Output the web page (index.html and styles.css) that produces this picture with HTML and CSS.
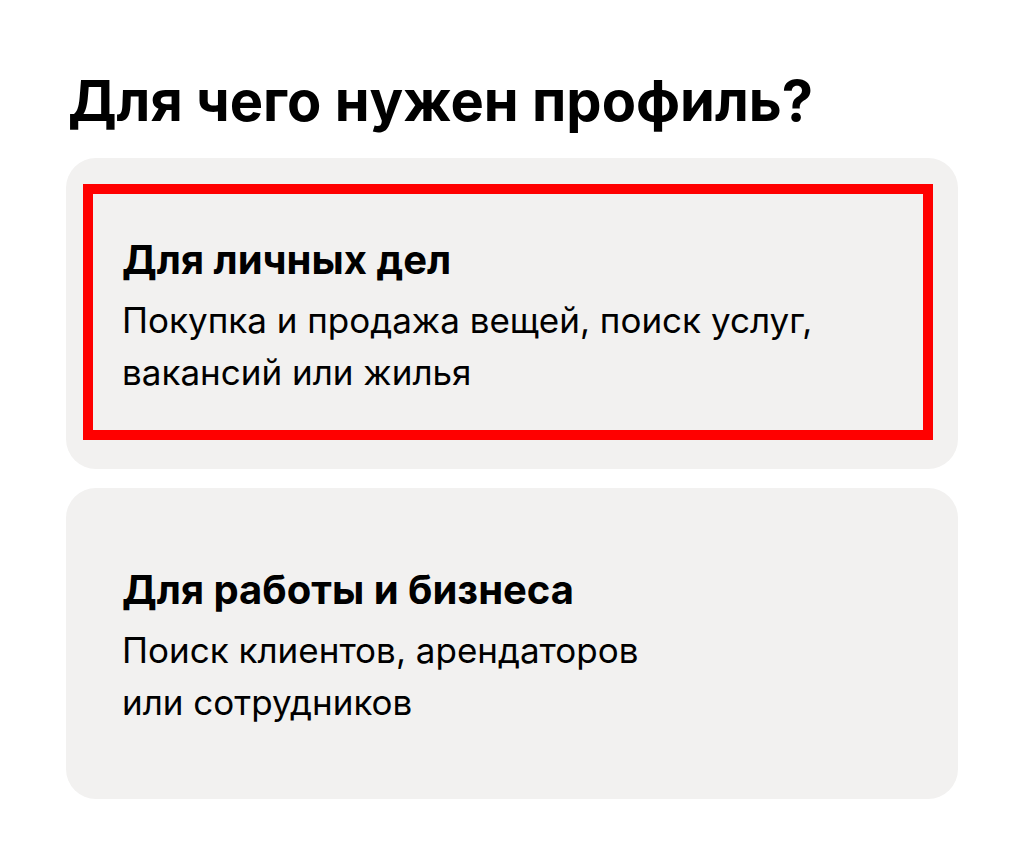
FILE: index.html
```html
<!DOCTYPE html>
<html lang="ru">
<head>
<meta charset="utf-8">
<title>Для чего нужен профиль?</title>
<link rel="stylesheet" href="styles.css">
</head>
<body>
<main class="page">
  <h1 class="page-title">Для чего нужен профиль?</h1>
  <div class="options">
    <section class="option option--marked">
      <div class="option-mark"></div>
      <h2 class="option-title">Для личных дел</h2>
      <p class="option-text">Покупка и продажа вещей, поиск услуг,<br>вакансий или жилья</p>
    </section>
    <section class="option">
      <h2 class="option-title">Для работы и бизнеса</h2>
      <p class="option-text">Поиск клиентов, арендаторов<br>или сотрудников</p>
    </section>
  </div>
</main>
</body>
</html>
```

FILE: styles.css
```css
html, body {
  margin: 0;
  padding: 0;
  background: #ffffff;
}

body {
  font-family: Inter, "Noto Sans", "Liberation Sans", sans-serif;
  color: #000000;
}

.page {
  width: 892px;
  padding: 68px 0 0 66px;
}

.page-title {
  margin: 0 0 23px 2px;
  font-size: 56px;
  line-height: 67px;
  font-weight: 700;
  letter-spacing: 0;
}

.options {
  display: flex;
  flex-direction: column;
  gap: 19px;
}

.option {
  position: relative;
  background: #f2f1f0;
  border-radius: 30px;
  padding: 78px 56px 71px;
}

.option-title {
  margin: 0 0 10px;
  font-size: 40px;
  line-height: 48px;
  font-weight: 700;
}

.option-text {
  margin: 0;
  font-size: 35px;
  line-height: 52px;
  font-weight: 400;
}

.option-mark {
  position: absolute;
  left: 17px;
  top: 26px;
  width: 830px;
  height: 236px;
  border: 10px solid #ff0000;
  pointer-events: none;
}
```
